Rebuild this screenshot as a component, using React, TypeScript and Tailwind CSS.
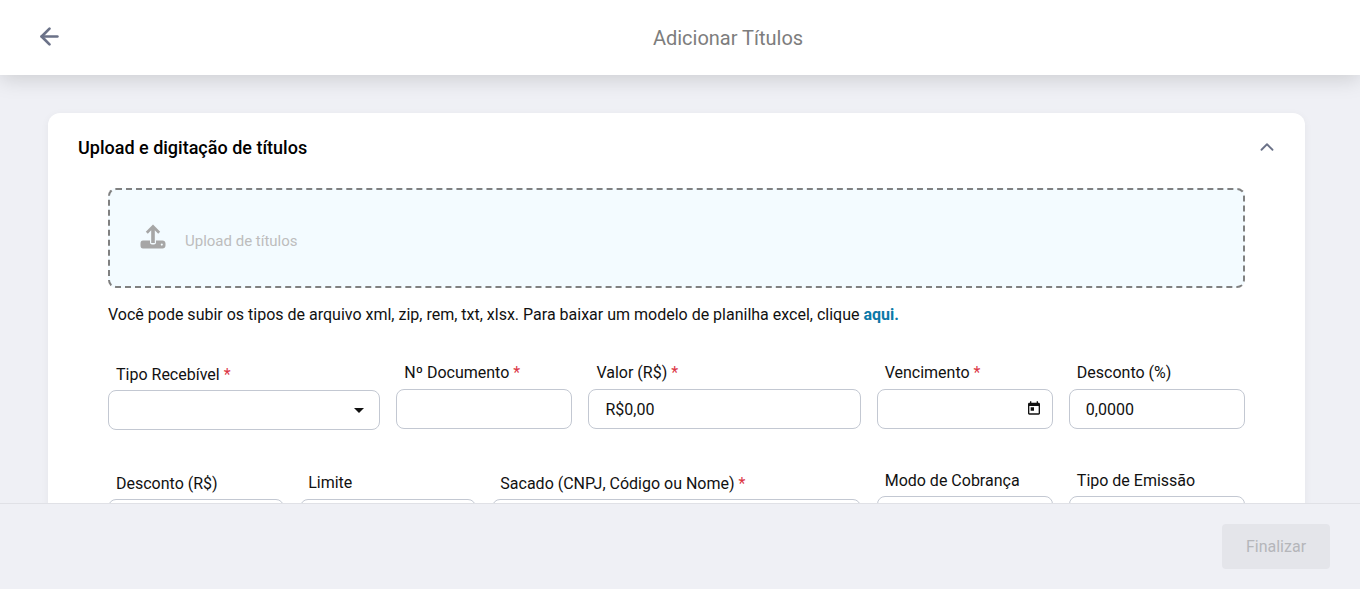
import { ArrowLeft, ChevronUp } from 'lucide-react';

function Label({ text, required }: { text: string; required?: boolean }) {
  return (
    <label className="block pl-2 text-[16px] leading-[22px] text-[#111111]">
      {text}
      {required && <span className="text-[#dc3545]"> *</span>}
    </label>
  );
}

function Box({ children }: { children?: React.ReactNode }) {
  return (
    <div className="flex h-10 items-center rounded-lg border border-[#c3c8d2] bg-white pl-4 pr-[10px] pt-[2px] text-[16px] text-[#111111]">
      {children}
    </div>
  );
}

function CalendarIcon() {
  return (
    <svg className="mb-[4px] ml-auto" width="16" height="16" viewBox="0 0 24 24" fill="#111111">
      <path d="M19 4h-1V2h-2v2H8V2H6v2H5c-1.1 0-2 .9-2 2v14c0 1.1.9 2 2 2h14c1.1 0 2-.9 2-2V6c0-1.1-.9-2-2-2zm0 16H5V9h14v11zM7 11h5v5H7z" />
    </svg>
  );
}

function UploadIcon() {
  return (
    <svg className="mb-[3px]" width="26" height="26" viewBox="0 0 26 26" fill="#a6a6a6">
      <path d="M13 0.5 L20.2 7.7 L18.2 9.7 L14.8 6.3 L14.8 19 L11.2 19 L11.2 6.3 L7.8 9.7 L5.8 7.7 Z" />
      <path d="M3 16.5 H10 V18.5 C10 19.6 10.9 20.5 12 20.5 H14 C15.1 20.5 16 19.6 16 18.5 V16.5 H22.5 C24.2 16.5 25.5 17.8 25.5 19.5 V21.5 C25.5 23.2 24.2 24.5 22.5 24.5 H3 C1.3 24.5 0.5 23.2 0.5 21.5 V19.5 C0.5 17.8 1.3 16.5 3 16.5 Z M21.8 19.6 a1 1 0 1 0 0.01 0 Z" fillRule="evenodd" />
    </svg>
  );
}

export default function App() {
  return (
    <div className="flex h-[589px] flex-col overflow-hidden bg-[#eff0f5] font-['Roboto',sans-serif]">
      {/* Top bar */}
      <header className="relative z-10 flex h-[75px] shrink-0 items-center justify-center bg-white pl-24 shadow-[0_4px_20px_rgba(0,0,0,0.15)]">
        <button className="absolute left-9 top-[23px] text-[#6b7288]">
          <ArrowLeft size={27} strokeWidth={2.4} />
        </button>
        <h1 className="text-[20px] text-[#7d7d7d]">Adicionar Títulos</h1>
      </header>

      {/* Content */}
      <main className="min-h-0 flex-1 overflow-hidden pl-12 pr-[55px] pt-[38px]">
        <section className="rounded-xl bg-white pb-10 shadow-[0_2px_8px_rgba(0,0,0,0.05)]">
          <div className="flex h-[75px] items-start justify-between pl-[30px] pr-[27px] pt-[23px]">
            <h2 className="text-[18px] font-medium leading-[23px] text-black">Upload e digitação de títulos</h2>
            <ChevronUp className="text-[#6b7288]" size={22} strokeWidth={2} />
          </div>

          <div className="px-[60px]">
            <div className="flex h-[100px] items-center rounded-lg border-2 border-dashed border-[#808080] bg-[#f3fbff] pl-[30px]">
              <UploadIcon />
              <span className="ml-[19px] mt-[6px] text-[15px] text-[#bdbdbd]">Upload de títulos</span>
            </div>

            <p className="mt-[17px] text-[16px] leading-5 text-[#111111]">
              Você pode subir os tipos de arquivo xml, zip, rem, txt, xlsx. Para baixar um modelo de planilha excel, clique{' '}
              <a className="font-bold text-[#0b79a8]">aqui.</a>
            </p>

            <div className="mt-[37px] grid grid-cols-12 gap-x-4 gap-y-10">
              <div className="col-span-3 pt-[2px]">
                <div className="mb-1"><Label text="Tipo Recebível" required /></div>
                <Box>
                  <span className="mb-[1px] ml-auto mr-[5px] border-x-[5px] border-t-[5px] border-x-transparent border-t-[#111111]" />
                </Box>
              </div>
              <div className="col-span-2">
                <div className="mb-[5px]"><Label text="Nº Documento" required /></div>
                <Box />
              </div>
              <div className="col-span-3">
                <div className="mb-[5px]"><Label text="Valor (R$)" required /></div>
                <Box>R$0,00</Box>
              </div>
              <div className="col-span-2">
                <div className="mb-[5px]"><Label text="Vencimento" required /></div>
                <Box><CalendarIcon /></Box>
              </div>
              <div className="col-span-2">
                <div className="mb-[5px]"><Label text="Desconto (%)" /></div>
                <Box>0,0000</Box>
              </div>

              <div className="col-span-2 pt-[3px]">
                <div className="mb-1"><Label text="Desconto (R$)" /></div>
                <Box />
              </div>
              <div className="col-span-2 pt-[2px]">
                <div className="mb-[5px]"><Label text="Limite" /></div>
                <Box />
              </div>
              <div className="col-span-4 pt-[3px]">
                <div className="mb-1"><Label text="Sacado (CNPJ, Código ou Nome)" required /></div>
                <Box />
              </div>
              <div className="col-span-2">
                <div className="mb-1"><Label text="Modo de Cobrança" /></div>
                <Box />
              </div>
              <div className="col-span-2">
                <div className="mb-1"><Label text="Tipo de Emissão" /></div>
                <Box />
              </div>
            </div>
          </div>
        </section>
      </main>

      {/* Footer */}
      <footer className="relative z-10 flex h-[86px] shrink-0 items-start justify-end border-t border-[#e0e1e6] bg-[#eff0f5] pr-[30px] pt-5">
        <button className="h-[45px] w-[108px] rounded bg-[#e4e5ea] text-[16px] text-[#b5b6ba]">Finalizar</button>
      </footer>
    </div>
  );
}
